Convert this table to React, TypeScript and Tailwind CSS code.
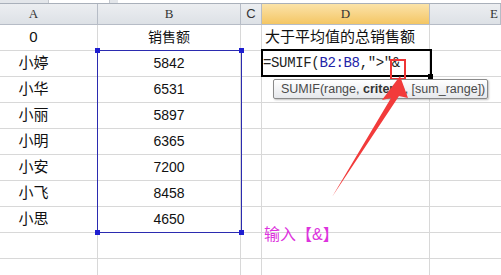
import React from "react";

const rows: { a: string; b: string }[] = [
  { a: "0", b: "销售额" },
  { a: "小婷", b: "5842" },
  { a: "小华", b: "6531" },
  { a: "小丽", b: "5897" },
  { a: "小明", b: "6365" },
  { a: "小安", b: "7200" },
  { a: "小飞", b: "8458" },
  { a: "小思", b: "4650" },
  { a: "", b: "" },
  { a: "", b: "" },
];

const cols = "grid grid-cols-[98px_143px_21px_168px_1fr]";
const cjk = "font-['Liberation_Sans','Noto_Sans_CJK_SC',sans-serif]";

function HeaderRow() {
  const cell = "h-[21px] border-b border-r border-[#b6bcc6] flex items-center text-[13px] text-[#333]";
  const gray = "bg-gradient-to-b from-[#eceef1] to-[#dde1e6]";
  return (
    <div className={cols}>
      <div className={`${cell} ${gray} justify-center pr-[30px] font-['Liberation_Serif',serif]`}>A</div>
      <div className={`${cell} ${gray} justify-center font-['Liberation_Serif',serif]`}>B</div>
      <div className={`${cell} ${gray} justify-center font-['Liberation_Sans',sans-serif]`}>C</div>
      <div className={`${cell} bg-gradient-to-b from-[#fbe3a8] to-[#f4c663] justify-center font-['Liberation_Serif',serif]`}>D</div>
      <div className={`${cell} ${gray} justify-start pl-[60px] font-['Liberation_Serif',serif]`}>E</div>
    </div>
  );
}

export default function App() {
  return (
    <div className={`relative w-[501px] h-[275px] overflow-hidden bg-white ${cjk}`}>
      {/* sliver of the formula bar */}
      <div className="flex h-[4px] border-b border-[#a9b0ba] bg-[#e3e6ea]">
        <div className="w-[48px]" />
        <div className="w-[62px] bg-white border-x border-[#c4c8ce]" />
        <div className="w-[8px]" />
        <div className="flex-1 bg-white" />
      </div>

      <HeaderRow />

      {rows.map((r, i) => (
        <div key={i} className={cols}>
          <div className="h-[26px] border-b border-r border-[#d8d8d8] flex items-center justify-center pr-[30px] text-[15px] text-[#111]">
            {r.a}
          </div>
          <div className="h-[26px] border-b border-r border-[#d8d8d8] flex items-center justify-center text-[14px] text-[#111]">
            {r.b}
          </div>
          <div className="h-[26px] border-b border-r border-[#d8d8d8]" />
          <div className="h-[26px] border-b border-r border-[#d8d8d8] flex items-center pl-[3px] text-[15px] text-[#111] whitespace-nowrap">
            {i === 0 && "大于平均值的总销售额"}
            {i === 1 && (
              <span className="-ml-[2px] font-['Liberation_Mono',monospace] text-[14px] tracking-[-0.35px] text-[#222]">
                =SUMIF(<span className="text-[#2222a8]">B2:B8</span>,"&gt;"&amp;
              </span>
            )}
          </div>
          <div className="h-[26px] border-b border-[#d8d8d8]" />
        </div>
      ))}

      {/* selection of B2:B8 */}
      <div className="absolute left-[97px] top-[50px] w-[145px] h-[183px] border-[1.5px] border-[#2b2bb0]" />
      <div className="absolute left-[95px] top-[48px] w-[5px] h-[5px] bg-[#1f1fd0]" />
      <div className="absolute left-[239px] top-[48px] w-[5px] h-[5px] bg-[#1f1fd0]" />
      <div className="absolute left-[95px] top-[230px] w-[5px] h-[5px] bg-[#1f1fd0]" />
      <div className="absolute left-[239px] top-[230px] w-[5px] h-[5px] bg-[#1f1fd0]" />

      {/* active cell D2 */}
      <div className="absolute left-[261px] top-[49px] w-[171px] h-[28px] border-2 border-black" />
      <div className="absolute left-[428px] top-[74px] w-[5px] h-[5px] bg-black" />

      {/* red highlight on & */}
      <div className="absolute left-[390px] top-[59px] w-[16px] h-[21px] border-2 border-[#ee3535]" />

      {/* function tooltip */}
      <div className="absolute left-[273px] top-[79px] w-[215px] h-[20px] border border-[#8a8a8a] rounded-[2px] bg-gradient-to-b from-white to-[#e6e8ec] shadow-[1px_1px_2px_rgba(0,0,0,0.25)] flex items-center pl-[7px] text-[12.5px] text-[#4a4a4a] font-['Liberation_Sans',sans-serif] whitespace-nowrap">
        <span>
          SUMIF(range, <b className="font-bold text-[#333]">criteria</b>, [sum_range])
        </span>
      </div>

      {/* red pointer arrow */}
      <svg className="absolute left-0 top-0" width="501" height="275">
        <polygon
          points="400,76 408,98 399,96 332,197 391,98 382,100"
          fill="#f23b3b"
        />
      </svg>

      <div className="absolute left-[264px] top-[223px] text-[16px] text-[#dd33dd] whitespace-nowrap">
        输入【&amp;】
      </div>
    </div>
  );
}
